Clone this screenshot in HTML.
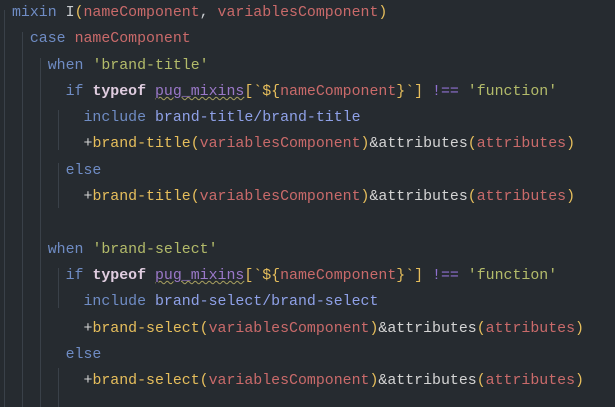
<!DOCTYPE html>
<html><head><meta charset="utf-8"><style>
html,body{margin:0;padding:0;background:#262b30;width:615px;height:407px;overflow:hidden}
.c{position:relative;font-family:"Liberation Mono",monospace;font-size:14.9px;line-height:26.3px;color:#c8ccd0;white-space:pre;padding-left:12px;padding-top:0}
.k{color:#6f8cc4}.n{color:#c96a6a}.s{color:#b3bb6a}.p{color:#8fa1e8}.t{color:#e0cde0;font-weight:bold}
.u{color:#9a78c8;text-decoration:underline wavy #a8a060;text-decoration-thickness:1px}
.y{color:#e6be5c}.o{color:#9070d0}.w{color:#d4d4d4}
.g{position:absolute;width:1px;background:#3a4149}
</style></head><body>
<div class="g" style="left:4px;top:10px;height:397px"></div>
<div class="g" style="left:22px;top:32px;height:375px"></div>
<div class="g" style="left:40px;top:58px;height:349px"></div>
<div class="g" style="left:58px;top:110px;height:40px"></div>
<div class="g" style="left:58px;top:163px;height:45px"></div>
<div class="g" style="left:58px;top:268px;height:40px"></div>
<div class="g" style="left:58px;top:368px;height:39px"></div>
<div class="c"><span class="k">mixin</span> I<span class="y">(</span><span class="n">nameComponent</span>, <span class="n">variablesComponent</span><span class="y">)</span>
  <span class="k">case</span> <span class="n">nameComponent</span>
    <span class="k">when</span> <span class="s">'brand-title'</span>
      <span class="k">if</span> <span class="t">typeof</span> <span class="u">pug_mixins</span><span class="y">[`${</span><span class="n">nameComponent</span><span class="y">}`]</span> <span class="o">!==</span> <span class="s">'function'</span>
        <span class="k">include</span> <span class="p">brand-title/brand-title</span>
        <span class="w">+</span><span class="y">brand-title(</span><span class="n">variablesComponent</span><span class="y">)</span><span class="w">&amp;attributes</span><span class="y">(</span><span class="n">attributes</span><span class="y">)</span>
      <span class="k">else</span>
        <span class="w">+</span><span class="y">brand-title(</span><span class="n">variablesComponent</span><span class="y">)</span><span class="w">&amp;attributes</span><span class="y">(</span><span class="n">attributes</span><span class="y">)</span>

    <span class="k">when</span> <span class="s">'brand-select'</span>
      <span class="k">if</span> <span class="t">typeof</span> <span class="u">pug_mixins</span><span class="y">[`${</span><span class="n">nameComponent</span><span class="y">}`]</span> <span class="o">!==</span> <span class="s">'function'</span>
        <span class="k">include</span> <span class="p">brand-select/brand-select</span>
        <span class="w">+</span><span class="y">brand-select(</span><span class="n">variablesComponent</span><span class="y">)</span><span class="w">&amp;attributes</span><span class="y">(</span><span class="n">attributes</span><span class="y">)</span>
      <span class="k">else</span>
        <span class="w">+</span><span class="y">brand-select(</span><span class="n">variablesComponent</span><span class="y">)</span><span class="w">&amp;attributes</span><span class="y">(</span><span class="n">attributes</span><span class="y">)</span></div>
</body></html>
